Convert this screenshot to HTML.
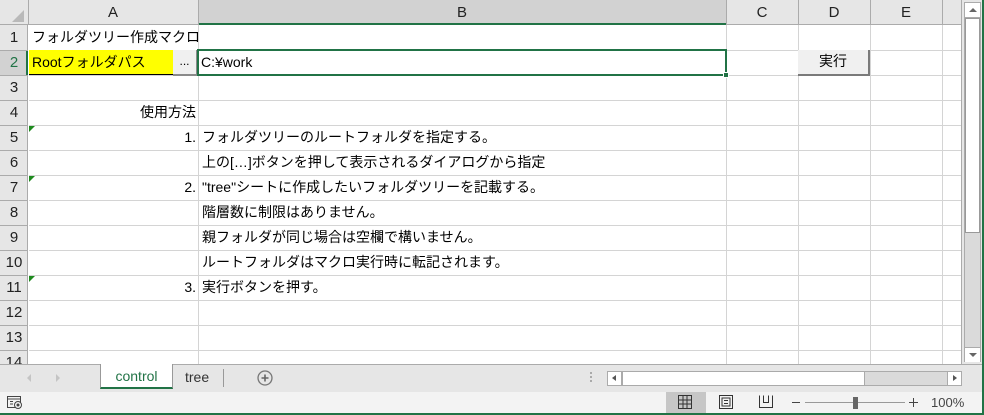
<!DOCTYPE html>
<html><head><meta charset="utf-8">
<style>
*{margin:0;padding:0;box-sizing:border-box}
body{width:984px;height:415px;overflow:hidden;background:#fff;position:relative;font-family:"Liberation Sans","Noto Sans CJK JP",sans-serif;font-size:14px;color:#000}
.a{position:absolute}
.hl{position:absolute;height:1px;background:#d4d4d4}
.vl{position:absolute;width:1px;background:#d4d4d4}
.rn{position:absolute;left:0;width:28px;text-align:center;font-size:15px;color:#222;line-height:25px}
.ch{position:absolute;top:0;height:25px;line-height:25px;text-align:center;font-size:15px;color:#222}
.t{position:absolute;line-height:25px;white-space:nowrap;font-size:14px}
.tri{position:absolute;left:29px;width:0;height:0;border-top:6px solid #1e8a1e;border-right:6px solid transparent}
</style></head><body>
<div class="a" style="left:0;top:0;width:962px;height:25px;background:#e6e6e6;border-bottom:1px solid #ababab"></div>
<div class="a" style="left:198px;top:0;width:528px;height:25px;background:#d2d2d2;border-bottom:2px solid #217346"></div>
<div class="a" style="left:12px;top:10px;width:0;height:0;border-bottom:12px solid #b9b9b9;border-left:12px solid transparent"></div>
<div class="a" style="left:0;top:25px;width:28px;height:339px;background:#e6e6e6;border-right:1px solid #ababab"></div>
<div class="a" style="left:0;top:50px;width:28px;height:25px;background:#d2d2d2;border-right:2px solid #217346"></div>
<div class="ch" style="left:28px;width:170px">A</div>
<div class="ch" style="left:198px;width:528px">B</div>
<div class="ch" style="left:726px;width:72px">C</div>
<div class="ch" style="left:798px;width:72px">D</div>
<div class="ch" style="left:870px;width:72px">E</div>
<div class="a" style="left:28px;top:0;width:1px;height:25px;background:#ababab"></div>
<div class="a" style="left:198px;top:0;width:1px;height:25px;background:#ababab"></div>
<div class="a" style="left:726px;top:0;width:1px;height:25px;background:#ababab"></div>
<div class="a" style="left:798px;top:0;width:1px;height:25px;background:#ababab"></div>
<div class="a" style="left:870px;top:0;width:1px;height:25px;background:#ababab"></div>
<div class="a" style="left:942px;top:0;width:1px;height:25px;background:#ababab"></div>
<div class="vl" style="left:198px;top:25px;height:339px"></div>
<div class="vl" style="left:726px;top:25px;height:339px"></div>
<div class="vl" style="left:798px;top:25px;height:339px"></div>
<div class="vl" style="left:870px;top:25px;height:339px"></div>
<div class="vl" style="left:942px;top:25px;height:339px"></div>
<div class="a" style="left:961px;top:0;width:1px;height:364px;background:#ababab"></div>
<div class="hl" style="left:29px;top:50px;width:932px"></div>
<div class="hl" style="left:29px;top:75px;width:932px"></div>
<div class="hl" style="left:29px;top:100px;width:932px"></div>
<div class="hl" style="left:29px;top:125px;width:932px"></div>
<div class="hl" style="left:29px;top:150px;width:932px"></div>
<div class="hl" style="left:29px;top:175px;width:932px"></div>
<div class="hl" style="left:29px;top:200px;width:932px"></div>
<div class="hl" style="left:29px;top:225px;width:932px"></div>
<div class="hl" style="left:29px;top:250px;width:932px"></div>
<div class="hl" style="left:29px;top:275px;width:932px"></div>
<div class="hl" style="left:29px;top:300px;width:932px"></div>
<div class="hl" style="left:29px;top:325px;width:932px"></div>
<div class="hl" style="left:29px;top:350px;width:932px"></div>
<div class="a" style="left:0;top:50px;width:28px;height:1px;background:#ababab"></div>
<div class="a" style="left:0;top:75px;width:28px;height:1px;background:#ababab"></div>
<div class="a" style="left:0;top:100px;width:28px;height:1px;background:#ababab"></div>
<div class="a" style="left:0;top:125px;width:28px;height:1px;background:#ababab"></div>
<div class="a" style="left:0;top:150px;width:28px;height:1px;background:#ababab"></div>
<div class="a" style="left:0;top:175px;width:28px;height:1px;background:#ababab"></div>
<div class="a" style="left:0;top:200px;width:28px;height:1px;background:#ababab"></div>
<div class="a" style="left:0;top:225px;width:28px;height:1px;background:#ababab"></div>
<div class="a" style="left:0;top:250px;width:28px;height:1px;background:#ababab"></div>
<div class="a" style="left:0;top:275px;width:28px;height:1px;background:#ababab"></div>
<div class="a" style="left:0;top:300px;width:28px;height:1px;background:#ababab"></div>
<div class="a" style="left:0;top:325px;width:28px;height:1px;background:#ababab"></div>
<div class="a" style="left:0;top:350px;width:28px;height:1px;background:#ababab"></div>
<div class="rn" style="top:25px">1</div>
<div class="rn" style="top:50px;color:#217346">2</div>
<div class="rn" style="top:75px">3</div>
<div class="rn" style="top:100px">4</div>
<div class="rn" style="top:125px">5</div>
<div class="rn" style="top:150px">6</div>
<div class="rn" style="top:175px">7</div>
<div class="rn" style="top:200px">8</div>
<div class="rn" style="top:225px">9</div>
<div class="rn" style="top:250px">10</div>
<div class="rn" style="top:275px">11</div>
<div class="rn" style="top:300px">12</div>
<div class="rn" style="top:325px">13</div>
<div class="rn" style="top:350px">14</div>
<div class="a" style="left:29px;top:26px;width:169px;height:24px;background:#fff"></div>
<div class="t" style="left:32px;top:25px">フォルダツリー作成マクロ</div>
<div class="a" style="left:29px;top:50px;width:144px;height:25px;background:#ffff00;border-bottom:1px solid #000"></div>
<div class="t" style="left:32px;top:50px">Rootフォルダパス</div>
<div class="a" style="left:173px;top:50px;width:25px;height:26px;background:#f0f0f0;border-right:2px solid #8a8a8a;border-bottom:2px solid #8a8a8a;text-align:center;line-height:22px;font-size:12px">...</div>
<div class="a" style="left:197px;top:49px;width:530px;height:27px;border:2px solid #217346"></div>
<div class="a" style="left:723px;top:72px;width:6px;height:6px;background:#217346;border:1px solid #fff"></div>
<div class="t" style="left:201px;top:50px">C:¥work</div>
<div class="a" style="left:798px;top:50px;width:72px;height:26px;background:#f0f0f0;border-right:2px solid #7a7a7a;border-bottom:2px solid #7a7a7a;text-align:center;line-height:23px;font-size:14px">実行</div>
<div class="t" style="left:29px;top:100px;width:167px;text-align:right">使用方法</div>
<div class="tri" style="top:126px"></div>
<div class="t" style="left:29px;top:125px;width:167px;text-align:right">1.</div>
<div class="t" style="left:202px;top:125px">フォルダツリーのルートフォルダを指定する。</div>
<div class="t" style="left:202px;top:150px">上の[…]ボタンを押して表示されるダイアログから指定</div>
<div class="tri" style="top:176px"></div>
<div class="t" style="left:29px;top:175px;width:167px;text-align:right">2.</div>
<div class="t" style="left:202px;top:175px">"tree"シートに作成したいフォルダツリーを記載する。</div>
<div class="t" style="left:202px;top:200px">階層数に制限はありません。</div>
<div class="t" style="left:202px;top:225px">親フォルダが同じ場合は空欄で構いません。</div>
<div class="t" style="left:202px;top:250px">ルートフォルダはマクロ実行時に転記されます。</div>
<div class="tri" style="top:276px"></div>
<div class="t" style="left:29px;top:275px;width:167px;text-align:right">3.</div>
<div class="t" style="left:202px;top:275px">実行ボタンを押す。</div>
<div class="a" style="left:962px;top:0;width:20px;height:364px;background:#e6e6e6"></div>
<div class="a" style="left:964px;top:2px;width:17px;height:360px;background:#dadada;border:1px solid #ababab"></div>
<div class="a" style="left:965px;top:3px;width:15px;height:15px;background:#fff;border-bottom:1px solid #ababab"></div>
<div class="a" style="left:969px;top:8px;width:0;height:0;border-left:4px solid transparent;border-right:4px solid transparent;border-bottom:4px solid #666"></div>
<div class="a" style="left:965px;top:18px;width:15px;height:215px;background:#fff;border:1px solid #999"></div>
<div class="a" style="left:965px;top:347px;width:15px;height:15px;background:#fff;border-top:1px solid #ababab"></div>
<div class="a" style="left:969px;top:353px;width:0;height:0;border-left:4px solid transparent;border-right:4px solid transparent;border-top:4px solid #666"></div>
<div class="a" style="left:982px;top:0;width:2px;height:415px;background:#217346"></div>
<div class="a" style="left:0;top:364px;width:982px;height:28px;background:#e6e6e6;border-top:1px solid #ababab"></div>
<div class="a" style="left:27px;top:374px;width:0;height:0;border-top:4px solid transparent;border-bottom:4px solid transparent;border-right:4px solid #c4c4c4"></div>
<div class="a" style="left:56px;top:374px;width:0;height:0;border-top:4px solid transparent;border-bottom:4px solid transparent;border-left:4px solid #c4c4c4"></div>
<div class="a" style="left:100px;top:364px;width:73px;height:25px;background:#fff;border-left:1px solid #999;border-right:1px solid #999;border-bottom:2px solid #217346;text-align:center;line-height:25px;color:#217346;font-size:14px">control</div>
<div class="t" style="left:185px;top:365px;color:#333">tree</div>
<div class="a" style="left:223px;top:369px;width:1px;height:18px;background:#999"></div>
<svg class="a" style="left:257px;top:370px" width="16" height="16" viewBox="0 0 16 16"><circle cx="8" cy="8" r="7" fill="none" stroke="#777" stroke-width="1.3"/><path d="M8 4.5V11.5M4.5 8H11.5" stroke="#666" stroke-width="1.6"/></svg>
<div class="a" style="left:590px;top:372px;width:2px;height:2px;background:#aaa;box-shadow:0 4px #aaa,0 8px #aaa"></div>
<div class="a" style="left:607px;top:371px;width:355px;height:15px;background:#dadada;border:1px solid #ababab"></div>
<div class="a" style="left:608px;top:372px;width:14px;height:13px;background:#fff;border-right:1px solid #ababab"></div>
<div class="a" style="left:612px;top:375px;width:0;height:0;border-top:3px solid transparent;border-bottom:3px solid transparent;border-right:4px solid #555"></div>
<div class="a" style="left:622px;top:371px;width:243px;height:15px;background:#fff;border:1px solid #aaa"></div>
<div class="a" style="left:947px;top:372px;width:14px;height:13px;background:#fff;border-left:1px solid #ababab"></div>
<div class="a" style="left:953px;top:375px;width:0;height:0;border-top:3px solid transparent;border-bottom:3px solid transparent;border-left:4px solid #555"></div>
<div class="a" style="left:0;top:392px;width:982px;height:21px;background:#f3f3f3"></div>
<div class="a" style="left:0;top:413px;width:984px;height:2px;background:#217346"></div>
<svg class="a" style="left:7px;top:396px" width="16" height="14" viewBox="0 0 16 14"><rect x="0.5" y="0.5" width="13" height="11" fill="none" stroke="#444"/><line x1="0.5" y1="3" x2="13" y2="3" stroke="#444"/><line x1="3" y1="5.5" x2="6" y2="5.5" stroke="#444"/><line x1="3" y1="8" x2="6" y2="8" stroke="#444"/><circle cx="11" cy="9" r="3.5" fill="#f3f3f3" stroke="#444"/><circle cx="11" cy="9" r="1.5" fill="#444"/></svg>
<div class="a" style="left:666px;top:392px;width:40px;height:21px;background:#c6c6c6"></div>
<svg class="a" style="left:678px;top:395px" width="14" height="14" viewBox="0 0 14 14"><g fill="none" stroke="#333"><rect x="0.5" y="0.5" width="13" height="13"/><line x1="5" y1="0" x2="5" y2="14"/><line x1="9" y1="0" x2="9" y2="14"/><line x1="0" y1="5" x2="14" y2="5"/><line x1="0" y1="9" x2="14" y2="9"/></g></svg>
<svg class="a" style="left:719px;top:395px" width="14" height="14" viewBox="0 0 14 14"><g fill="none" stroke="#333"><rect x="0.5" y="0.5" width="13" height="13"/><rect x="3" y="3" width="8" height="8"/><line x1="5" y1="5.5" x2="9" y2="5.5"/><line x1="5" y1="8.5" x2="9" y2="8.5"/></g></svg>
<svg class="a" style="left:759px;top:395px" width="14" height="13" viewBox="0 0 14 13"><g fill="none" stroke="#333"><path d="M0.5 0.5V12.5H13.5V0.5M4.5 0.5V7.5H9.5V0.5"/></g></svg>
<div class="a" style="left:792px;top:402px;width:8px;height:1px;background:#444"></div>
<div class="a" style="left:805px;top:402px;width:100px;height:1px;background:#999"></div>
<div class="a" style="left:853px;top:397px;width:5px;height:12px;background:#666"></div>
<div class="a" style="left:909px;top:402px;width:9px;height:1px;background:#444"></div>
<div class="a" style="left:913px;top:398px;width:1px;height:9px;background:#444"></div>
<div class="a" style="left:931px;top:394px;font-size:13px;color:#444;line-height:17px">100%</div>
</body></html>
